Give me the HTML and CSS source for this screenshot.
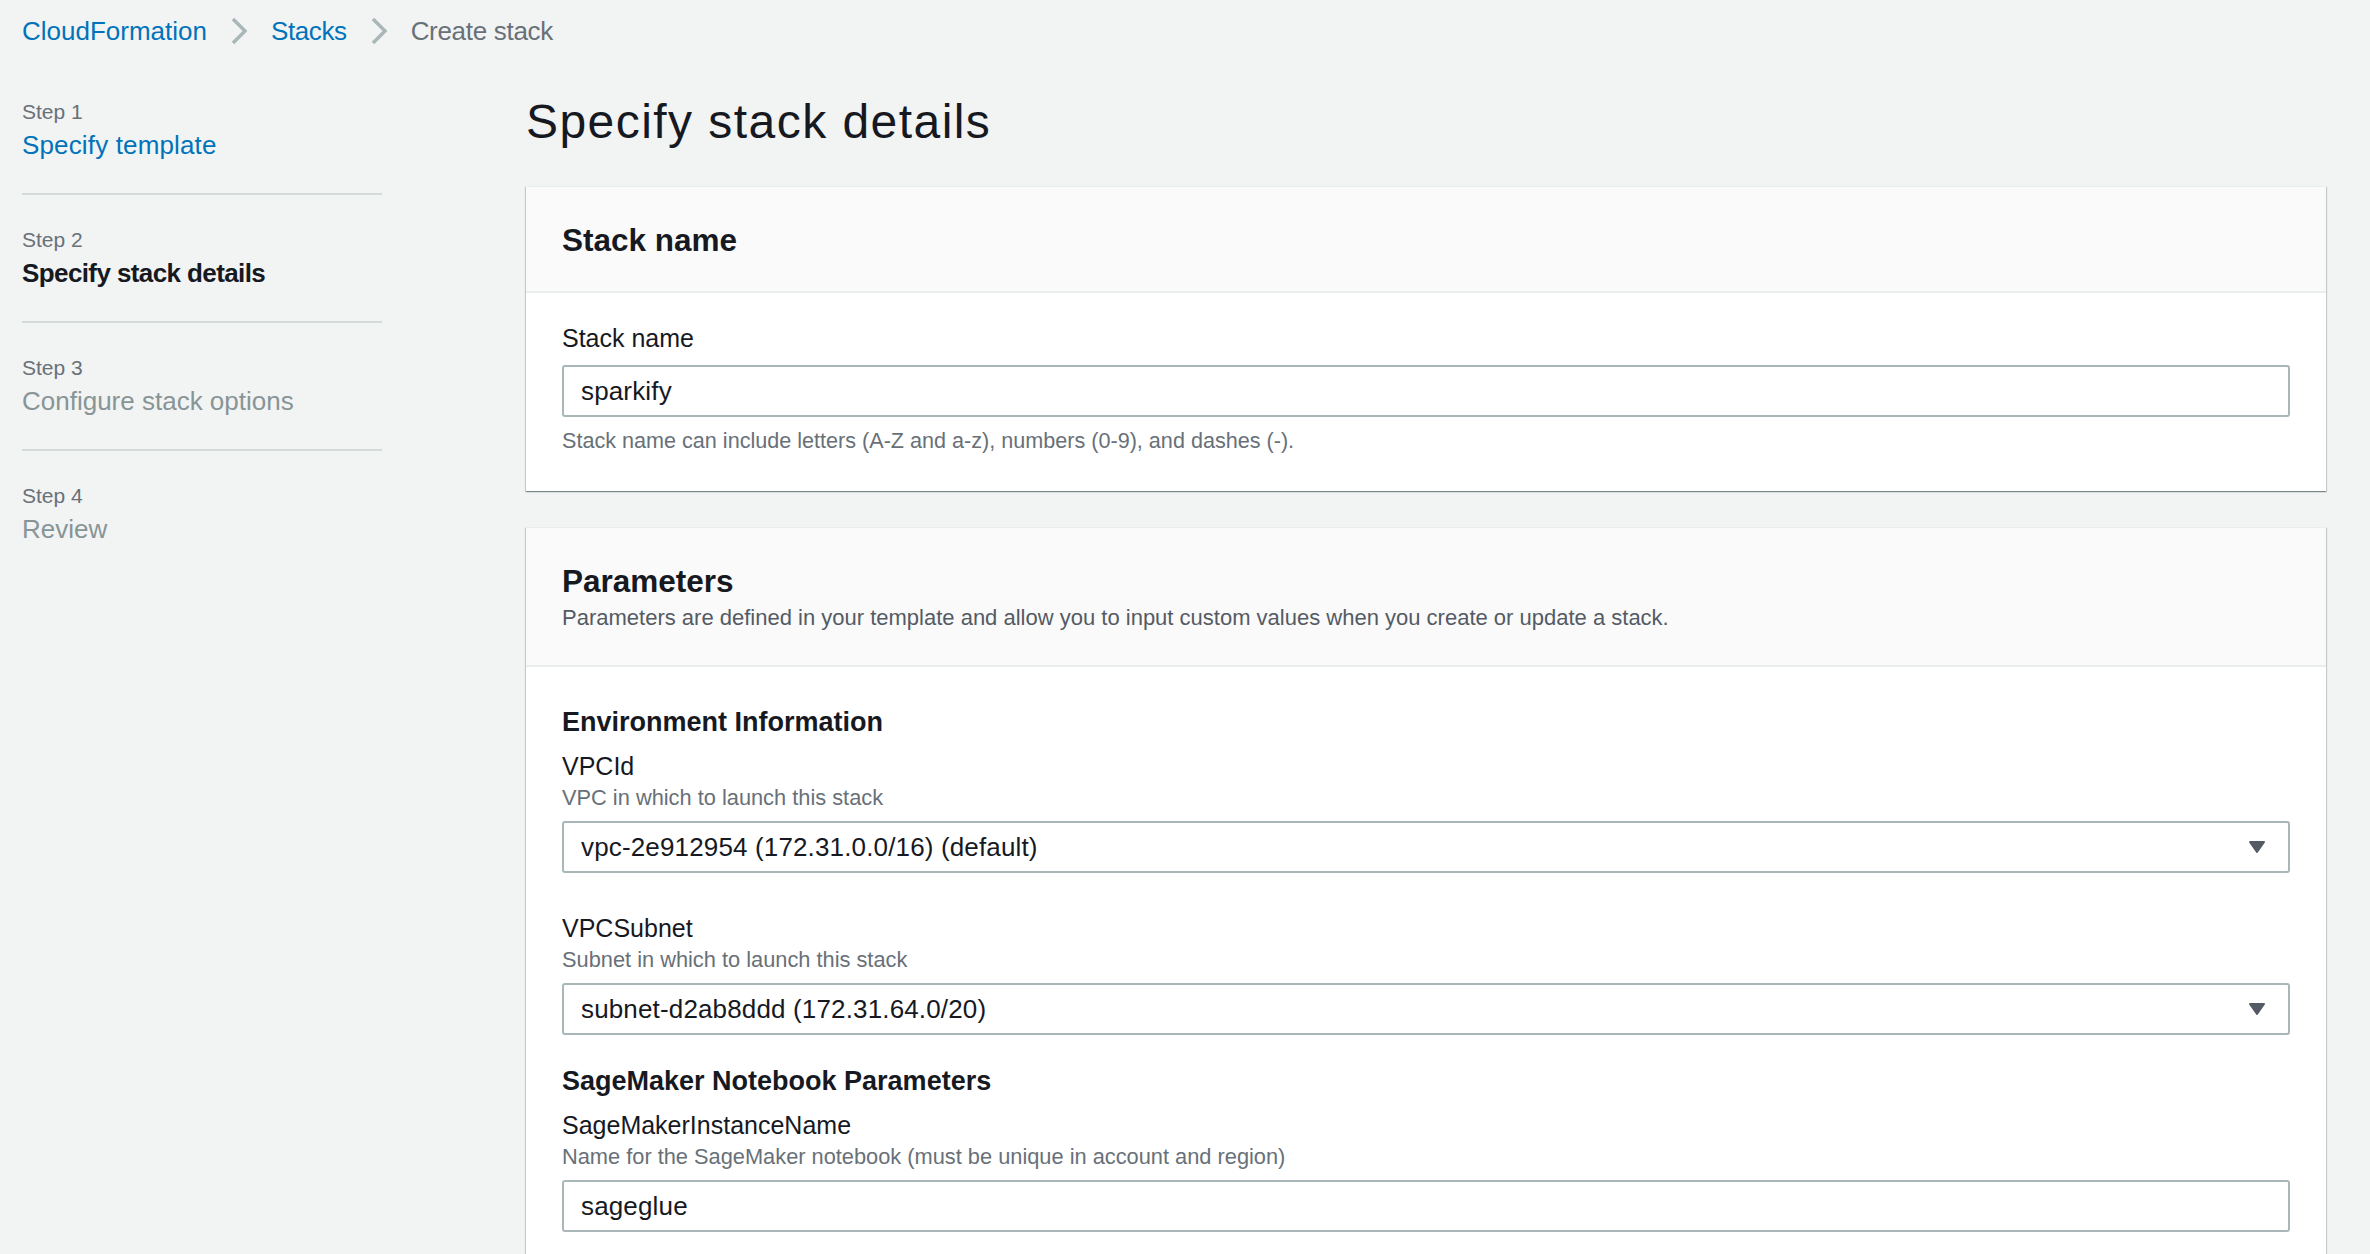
FILE: index.html
```html
<!DOCTYPE html>
<html lang="en">
<head>
<meta charset="utf-8">
<title>Create stack - CloudFormation</title>
<link rel="stylesheet" href="styles.css">
</head>
<body>
<div class="page">
  <nav class="breadcrumb">
    <a class="crumb-link" href="#">CloudFormation</a>
    <svg class="crumb-sep" width="16" height="28" viewBox="0 0 16 28"><path d="M2 2 L14 14 L2 26" fill="none" stroke="#aab7b8" stroke-width="3.5"/></svg>
    <a class="crumb-link" href="#">Stacks</a>
    <svg class="crumb-sep" width="16" height="28" viewBox="0 0 16 28"><path d="M2 2 L14 14 L2 26" fill="none" stroke="#aab7b8" stroke-width="3.5"/></svg>
    <span class="crumb-current">Create stack</span>
  </nav>

  <div class="layout">
    <aside class="steps">
      <div class="step">
        <div class="step-label">Step 1</div>
        <a class="step-title step-link" href="#">Specify template</a>
      </div>
      <div class="step">
        <div class="step-label">Step 2</div>
        <div class="step-title step-current">Specify stack details</div>
      </div>
      <div class="step">
        <div class="step-label">Step 3</div>
        <div class="step-title step-disabled">Configure stack options</div>
      </div>
      <div class="step step-last">
        <div class="step-label">Step 4</div>
        <div class="step-title step-disabled">Review</div>
      </div>
    </aside>

    <main class="main">
      <h1 class="page-title">Specify stack details</h1>

      <section class="card">
        <header class="card-header">
          <h2 class="card-title">Stack name</h2>
        </header>
        <div class="card-body card-body-first">
          <label class="field-label" for="stackname">Stack name</label>
          <input class="text-input input-nodesc" id="stackname" type="text" value="sparkify" readonly>
          <div class="help">Stack name can include letters (A-Z and a-z), numbers (0-9), and dashes (-).</div>
        </div>
      </section>

      <section class="card">
        <header class="card-header">
          <h2 class="card-title">Parameters</h2>
          <div class="card-desc">Parameters are defined in your template and allow you to input custom values when you create or update a stack.</div>
        </header>
        <div class="card-body card-body-params">
          <h3 class="group-title">Environment Information</h3>
          <div class="field">
            <div class="field-label">VPCId</div>
            <div class="field-desc">VPC in which to launch this stack</div>
            <div class="select">
              <span class="select-value">vpc-2e912954 (172.31.0.0/16) (default)</span>
              <svg class="select-arrow" width="18" height="14" viewBox="0 0 18 14"><path d="M2 2 H16 L9 12 Z" fill="#545b64" stroke="#545b64" stroke-width="2" stroke-linejoin="round"/></svg>
            </div>
          </div>
          <div class="field field-next">
            <div class="field-label">VPCSubnet</div>
            <div class="field-desc">Subnet in which to launch this stack</div>
            <div class="select">
              <span class="select-value">subnet-d2ab8ddd (172.31.64.0/20)</span>
              <svg class="select-arrow" width="18" height="14" viewBox="0 0 18 14"><path d="M2 2 H16 L9 12 Z" fill="#545b64" stroke="#545b64" stroke-width="2" stroke-linejoin="round"/></svg>
            </div>
          </div>

          <h3 class="group-title group-next">SageMaker Notebook Parameters</h3>
          <div class="field">
            <div class="field-label">SageMakerInstanceName</div>
            <div class="field-desc">Name for the SageMaker notebook (must be unique in account and region)</div>
            <input class="text-input" type="text" value="sageglue" readonly>
          </div>
        </div>
      </section>
    </main>
  </div>
</div>
</body>
</html>
```
FILE: styles.css
```css
* { box-sizing: border-box; }

html, body {
  margin: 0;
  padding: 0;
  background: #f2f3f3;
  color: #16191f;
  font-family: "Liberation Sans", Arial, sans-serif;
}

body { overflow: hidden; height: 1254px; }

.page {
  padding: 13px 44px 0 22px;
}

/* Breadcrumb */
.breadcrumb {
  display: flex;
  align-items: center;
  height: 36px;
  font-size: 26px;
  line-height: 36px;
}
.crumb-link {
  color: #0073bb;
  text-decoration: none;
}
.crumb-sep {
  display: block;
  margin: 0 24px;
}
.crumb-current {
  color: #687078;
  letter-spacing: -0.3px;
}
.crumb-link + .crumb-sep + .crumb-link { letter-spacing: -0.4px; }

/* Layout */
.layout {
  display: flex;
  margin-top: 18px;
}

.steps {
  width: 360px;
  flex-shrink: 0;
  margin-right: 144px;
}
.step {
  padding: 30px 0;
  border-bottom: 2px solid #d5dbdb;
}
.step-last { border-bottom: none; }
.step-label {
  font-size: 21px;
  line-height: 30px;
  color: #687078;
}
.step-title {
  display: block;
  font-size: 26px;
  line-height: 36px;
  text-decoration: none;
}
.step-link { color: #0073bb; letter-spacing: 0.15px; }
.step-current { color: #16191f; font-weight: 700; letter-spacing: -0.6px; }
.step-disabled { color: #879596; }

.main {
  flex: 1;
  min-width: 0;
}

.page-title {
  margin: 25px 0 34px;
  font-size: 48px;
  line-height: 60px;
  font-weight: 400;
  letter-spacing: 1.45px;
  color: #16191f;
}

/* Cards */
.card {
  background: #ffffff;
  border-top: 1px solid #eaeded;
  box-shadow: 0 1px 1px 0 rgba(0, 28, 36, 0.3), 1px 1px 1px 0 rgba(0, 28, 36, 0.15), -1px 1px 1px 0 rgba(0, 28, 36, 0.15);
  margin-bottom: 36px;
}
.card-header {
  background: #fafafa;
  padding: 33px 36px 31px;
  border-bottom: 2px solid #eaeded;
}
.card-title {
  margin: 0;
  font-size: 31.5px;
  line-height: 40px;
  font-weight: 700;
}
.card-desc {
  margin-top: 1px;
  font-size: 22px;
  line-height: 32px;
  color: #545b64;
}
.card-body {
  padding: 28px 36px 35px;
}
.card-body-params {
  padding-top: 37px;
}

.group-title {
  margin: 0;
  font-size: 27px;
  line-height: 36px;
  font-weight: 700;
}
.group-next { margin-top: 28px; }

.field { margin-top: 9px; }
.field-next { margin-top: 38px; }

.field-label {
  display: block;
  font-size: 25px;
  line-height: 34px;
  color: #16191f;
}
.field-desc {
  font-size: 21.8px;
  line-height: 30px;
  color: #687078;
}

.text-input,
.select {
  display: block;
  width: 100%;
  height: 52px;
  margin-top: 8px;
  border: 2px solid #aab7b8;
  border-radius: 3px;
  background: #ffffff;
  padding: 0 17px;
  font-family: inherit;
  font-size: 26px;
  line-height: 48px;
  letter-spacing: 0.15px;
  color: #16191f;
  outline: none;
}
.input-nodesc { margin-top: 10px; }

.select {
  display: flex;
  align-items: center;
  justify-content: space-between;
  padding-right: 22px;
}
.select-arrow { display: block; flex-shrink: 0; }

.help {
  margin-top: 9px;
  font-size: 21.6px;
  line-height: 30px;
  color: #687078;
}
```
